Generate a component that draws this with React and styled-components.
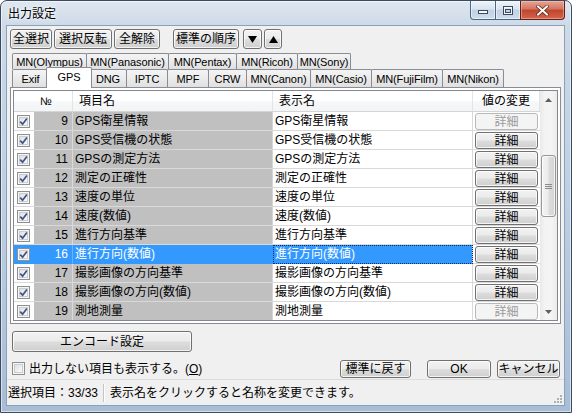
import React from 'react';
import styled, { createGlobalStyle, css } from 'styled-components';

const FONT = `"Liberation Sans", "Noto Sans CJK JP", sans-serif`;

const GlobalStyle = createGlobalStyle`
  html, body { margin: 0; padding: 0; background: #ffffff; overflow: hidden; }
  body { font-family: ${FONT}; font-size: 12px; }
  * { box-sizing: border-box; }
`;

const Window = styled.div`
  width: 572px;
  height: 413px;
  display: flex;
  flex-direction: column;
  border: 1px solid #3b4a5e;
  border-radius: 7px 7px 0 0;
  padding: 0 7px 7px 6px;
  background: linear-gradient(180deg, #dfe7f0 0px, #ccd9e7 26px, #bccfe3 200px, #a7bdd6 413px);
  box-shadow: inset 0 0 0 1px rgba(255, 255, 255, 0.55);
  font-family: ${FONT};
  font-size: 12px;
  color: #000;
`;

const TitleBar = styled.div`
  height: 25px;
  flex: none;
  display: flex;
  align-items: flex-start;
  justify-content: space-between;
`;

const Title = styled.div`
  padding: 6px 0 0 1px;
  font-size: 12px;
  line-height: 14px;
  color: #000;
  text-shadow: 0 0 6px #fff, 0 0 3px #fff;
`;

const Controls = styled.div`
  display: flex;
  margin-right: -1px;
`;

const CtrlBtn = styled.div`
  width: ${(p) => p.$w}px;
  height: 19px;
  margin-left: -1px;
  display: flex;
  align-items: center;
  justify-content: center;
  border: 1px solid #4e6580;
  border-top: none;
  background: linear-gradient(180deg, #eef3f9 0%, #d9e4f0 45%, #c2d2e3 50%, #cfdcea 100%);
  box-shadow: inset 0 0 0 1px rgba(255, 255, 255, 0.5);
  ${(p) => p.$first && css`border-radius: 0 0 0 4px;`}
  ${(p) =>
    p.$close &&
    css`
      border-color: #5b2218;
      border-radius: 0 0 4px 0;
      background: linear-gradient(180deg, #e8a493 0%, #d27460 45%, #c0452d 50%, #d4644a 100%);
      box-shadow: inset 0 0 0 1px rgba(255, 210, 200, 0.45);
    `}
`;

const Client = styled.div`
  flex: 1;
  min-height: 0;
  display: flex;
  flex-direction: column;
  background: #f0f0f0;
  box-shadow: 0 0 0 1px #8da0b9;
`;

const Toolbar = styled.div`
  display: flex;
  height: 23px;
  padding: 3px 0 0 3px;
  flex: none;
`;

const Button = styled.button`
  font-family: ${FONT};
  font-size: 12px;
  line-height: 14px;
  color: #000;
  padding: 0;
  flex: none;
  border: 1px solid #707070;
  border-radius: 3px;
  background: linear-gradient(180deg, #f2f2f2 0%, #ebebeb 48%, #dddddd 52%, #cfcfcf 100%);
  box-shadow: inset 0 0 0 1px rgba(255, 255, 255, 0.75);
  display: inline-flex;
  align-items: center;
  justify-content: center;
  white-space: nowrap;
  ${(p) =>
    p.disabled &&
    css`
      border-color: #b5b9bc;
      background: #f4f4f4;
      color: #9a9a9a;
      box-shadow: none;
    `}
`;

const ToolButton = styled(Button)`
  width: ${(p) => p.$w}px;
  height: 20px;
  margin-left: ${(p) => p.$ml || 0}px;
`;

const Tabs = styled.div`
  display: flex;
  flex-direction: column;
  margin: 4px 0 0 5px;
  flex: none;
`;

const TabRow = styled.div`
  display: flex;
  align-items: flex-end;
  height: ${(p) => p.$h}px;
`;

const Tab = styled.div`
  width: ${(p) => p.$w}px;
  height: ${(p) => p.$h}px;
  margin-left: -1px;
  &:first-child {
    margin-left: 0;
  }
  border: 1px solid #898c95;
  border-bottom: none;
  border-radius: 2px 2px 0 0;
  background: linear-gradient(180deg, #f4f4f4 0%, #ebebeb 50%, #e0e0e0 100%);
  display: flex;
  align-items: center;
  justify-content: center;
  white-space: nowrap;
  line-height: 14px;
  font-size: 11px;
  letter-spacing: -0.1px;
  ${(p) =>
    p.$active &&
    css`
      position: relative;
      z-index: 2;
      width: ${p.$w + 4}px;
      height: 21px;
      margin: 0 -2px -1px -3px;
      background: #ffffff;
      padding-bottom: 3px;
    `}
`;

const Panel = styled.div`
  margin: 0 3px;
  height: 237px;
  flex: none;
  border: 1px solid #898c95;
  background: #ffffff;
  padding: 2px;
`;

const ListView = styled.div`
  display: flex;
  height: 231px;
  border: 1px solid #828790;
  background: #ffffff;
  overflow: hidden;
`;

const ListBody = styled.div`
  flex: 1;
  display: flex;
  flex-direction: column;
  overflow: hidden;
`;

const COLS = '20px 39px 200px 200px 67px';

const HeaderRow = styled.div`
  display: grid;
  grid-template-columns: ${COLS};
  height: 21px;
  flex: none;
  background: linear-gradient(180deg, #ffffff 0%, #ffffff 50%, #f7f8fa 51%, #f3f4f6 100%);
  border-bottom: 1px solid #d5d5d5;
`;

const HeaderCell = styled.div`
  display: flex;
  align-items: center;
  justify-content: ${(p) => (p.$center ? 'center' : 'flex-start')};
  padding-left: ${(p) => (p.$center ? 0 : p.$pl ?? 6)}px;
  border-right: 1px solid ${(p) => (p.$noline ? 'transparent' : '#e5e5e5')};
  line-height: 14px;
  font-size: ${(p) => (p.$small ? 11 : 12)}px;
`;

const Row = styled.div`
  display: grid;
  grid-template-columns: ${COLS};
  height: 19px;
  flex: none;
`;

const Cell = styled.div`
  display: flex;
  align-items: center;
  border-bottom: 1px solid ${(p) => (p.$sel ? '#3399ff' : '#d9d9d9')};
  line-height: 14px;
  white-space: nowrap;
  overflow: hidden;
  background: ${(p) => (p.$sel ? '#3399ff' : p.$gray ? '#c0c0c0' : '#ffffff')};
  color: ${(p) => (p.$sel ? '#ffffff' : '#000000')};
`;

const CheckCell = styled(Cell)`
  padding-left: 3px;
`;

const NumCell = styled(Cell)`
  justify-content: flex-end;
  padding-right: 4px;
  border-right: 1px solid ${(p) => (p.$sel ? '#6fb3ff' : '#dadada')};
`;

const NameCell = styled(Cell)`
  padding-left: 2px;
  border-right: 1px solid ${(p) => (p.$sel ? '#3399ff' : '#d4d4d4')};
`;

const DispCell = styled(Cell)`
  padding-left: 2px;
  border-right: 1px solid #d9d9d9;
  ${(p) =>
    p.$sel &&
    css`
      outline: 1px dotted #0b2a66;
      outline-offset: -1px;
    `}
`;

const BtnCell = styled(Cell)`
  padding: 0 2px;
  background: #ffffff;
  border-bottom-color: #d9d9d9;
`;

const DetailButton = styled(Button)`
  width: 63px;
  height: 17px;
  margin-top: 1px;
`;

const CheckBoxBox = styled.span`
  width: 13px;
  height: 13px;
  flex: none;
  border: 1px solid #8e8f8f;
  background: linear-gradient(135deg, #dadada 0%, #efefef 55%, #ffffff 100%);
  box-shadow: inset 0 0 0 1px #f6f6f6, inset 0 0 0 2px #c9ccd1;
  display: flex;
  align-items: center;
  justify-content: center;
`;

const CheckBox = ({ checked }) => (
  <CheckBoxBox>
    {checked && (
      <svg width="9" height="9" viewBox="0 0 9 9">
        <path d="M1.2 4.6 L3.6 7.2 L7.9 1.4" stroke="#3f5486" strokeWidth="1.7" fill="none" />
      </svg>
    )}
  </CheckBoxBox>
);

const ScrollBar = styled.div`
  width: 17px;
  flex: none;
  display: flex;
  flex-direction: column;
  background: linear-gradient(90deg, #e9e9e9 0%, #f4f4f4 30%, #f4f4f4 70%, #ebebeb 100%);
`;

const ScrollArrow = styled.div`
  height: 17px;
  flex: none;
  display: flex;
  align-items: center;
  justify-content: center;
  ${(p) => p.$down && css`margin-top: auto;`}
`;

const Thumb = styled.div`
  margin: 47px 1px 0 1px;
  height: 62px;
  flex: none;
  border: 1px solid #979797;
  border-radius: 3px;
  background: linear-gradient(90deg, #f3f3f3 0%, #ececec 45%, #dcdcdc 55%, #d4d4d4 100%);
  box-shadow: inset 0 0 0 1px rgba(255, 255, 255, 0.7);
  display: flex;
  align-items: center;
  justify-content: center;
`;

const EncodeRow = styled.div`
  display: flex;
  padding: 7px 0 0 5px;
  flex: none;
`;

const EncodeButton = styled(Button)`
  width: 180px;
  height: 21px;
`;

const ActionRow = styled.div`
  display: flex;
  align-items: center;
  height: 19px;
  margin-top: 7px;
  padding: 0 4px 0 5px;
  flex: none;
`;

const CheckLabel = styled.span`
  margin-left: 4px;
  line-height: 14px;
  color: #000;
`;

const Underline = styled.span`
  text-decoration: underline;
`;

const DialogButton = styled(Button)`
  width: ${(p) => p.$w}px;
  height: 18px;
  margin-left: ${(p) => (p.$auto ? 'auto' : `${p.$ml}px`)};
`;

const StatusBar = styled.div`
  margin-top: auto;
  height: 26px;
  flex: none;
  display: flex;
  align-items: center;
  border-top: 1px solid #dcdcdc;
  position: relative;
`;

const StatusPane = styled.div`
  width: ${(p) => (p.$w ? `${p.$w}px` : 'auto')};
  flex: ${(p) => (p.$w ? 'none' : 1)};
  padding-left: ${(p) => p.$pl}px;
  line-height: 14px;
  white-space: nowrap;
`;

const StatusSep = styled.div`
  width: 2px;
  height: 18px;
  border-left: 1px solid #c5c5c5;
  border-right: 1px solid #ffffff;
  flex: none;
`;

const Grip = styled.svg`
  position: absolute;
  right: 2px;
  bottom: 2px;
`;

const rows = [
  { n: 9, name: 'GPS衛星情報', disabled: true },
  { n: 10, name: 'GPS受信機の状態' },
  { n: 11, name: 'GPSの測定方法' },
  { n: 12, name: '測定の正確性' },
  { n: 13, name: '速度の単位' },
  { n: 14, name: '速度(数値)' },
  { n: 15, name: '進行方向基準' },
  { n: 16, name: '進行方向(数値)', sel: true },
  { n: 17, name: '撮影画像の方向基準' },
  { n: 18, name: '撮影画像の方向(数値)' },
  { n: 19, name: '測地測量', disabled: true },
];

const tabsRow1 = [
  ['MN(Olympus)', 75],
  ['MN(Panasonic)', 83],
  ['MN(Pentax)', 69],
  ['MN(Ricoh)', 62],
  ['MN(Sony)', 54],
];

const tabsRow2 = [
  ['Exif', 37],
  ['GPS', 42, true],
  ['DNG', 38],
  ['IPTC', 42],
  ['MPF', 42],
  ['CRW', 39],
  ['MN(Canon)', 65],
  ['MN(Casio)', 62],
  ['MN(FujiFilm)', 72],
  ['MN(Nikon)', 62],
];

export default function App() {
  return (
    <>
      <GlobalStyle />
      <Window>
        <TitleBar>
          <Title>出力設定</Title>
          <Controls>
            <CtrlBtn $w={26} $first>
              <svg width="10" height="8" viewBox="0 0 10 8">
                <rect x="0.5" y="4.5" width="9" height="3" fill="#f4f7fb" stroke="#3a4a5e" />
              </svg>
            </CtrlBtn>
            <CtrlBtn $w={26}>
              <svg width="10" height="9" viewBox="0 0 10 9">
                <rect x="0.5" y="0.5" width="9" height="8" fill="none" stroke="#3a4a5e" />
                <rect x="1.5" y="1.5" width="7" height="6" fill="none" stroke="#f4f7fb" />
                <rect x="2.5" y="3.5" width="5" height="3" fill="none" stroke="#3a4a5e" />
              </svg>
            </CtrlBtn>
            <CtrlBtn $w={45} $close>
              <svg width="13" height="11" viewBox="0 0 13 11">
                <path d="M2 1.5 L11 9.5 M11 1.5 L2 9.5" stroke="#5a1c12" strokeWidth="3.4" strokeLinecap="square" />
                <path d="M2 1.5 L11 9.5 M11 1.5 L2 9.5" stroke="#ffffff" strokeWidth="2" strokeLinecap="square" />
              </svg>
            </CtrlBtn>
          </Controls>
        </TitleBar>
        <Client>
          <Toolbar>
            <ToolButton $w={42}>全選択</ToolButton>
            <ToolButton $w={58} $ml={2}>選択反転</ToolButton>
            <ToolButton $w={46} $ml={2}>全解除</ToolButton>
            <ToolButton $w={66} $ml={13}>標準の順序</ToolButton>
            <ToolButton $w={19} $ml={4}>
              <svg width="9" height="7" viewBox="0 0 9 7">
                <path d="M0 0 H9 L4.5 7 Z" fill="#000" />
              </svg>
            </ToolButton>
            <ToolButton $w={18} $ml={2}>
              <svg width="9" height="7" viewBox="0 0 9 7">
                <path d="M0 7 H9 L4.5 0 Z" fill="#000" />
              </svg>
            </ToolButton>
          </Toolbar>
          <Tabs>
            <TabRow $h={16}>
              {tabsRow1.map(([t, w]) => (
                <Tab key={t} $w={w} $h={16}>
                  {t}
                </Tab>
              ))}
            </TabRow>
            <TabRow $h={18}>
              {tabsRow2.map(([t, w, a]) => (
                <Tab key={t} $w={w} $h={18} $active={a}>
                  {t}
                </Tab>
              ))}
            </TabRow>
          </Tabs>
          <Panel>
            <ListView>
              <ListBody>
                <HeaderRow>
                  <HeaderCell $noline />
                  <HeaderCell $pl={6} $small>№</HeaderCell>
                  <HeaderCell $pl={6}>項目名</HeaderCell>
                  <HeaderCell $pl={6}>表示名</HeaderCell>
                  <HeaderCell $center>値の変更</HeaderCell>
                </HeaderRow>
                {rows.map((r) => (
                  <Row key={r.n}>
                    <CheckCell $sel={r.sel}>
                      <CheckBox checked />
                    </CheckCell>
                    <NumCell $gray $sel={r.sel}>{r.n}</NumCell>
                    <NameCell $gray $sel={r.sel}>{r.name}</NameCell>
                    <DispCell $sel={r.sel}>{r.name}</DispCell>
                    <BtnCell>
                      <DetailButton disabled={r.disabled}>詳細</DetailButton>
                    </BtnCell>
                  </Row>
                ))}
              </ListBody>
              <ScrollBar>
                <ScrollArrow>
                  <svg width="7" height="4" viewBox="0 0 7 4">
                    <path d="M0 4 H7 L3.5 0 Z" fill="#606060" />
                  </svg>
                </ScrollArrow>
                <Thumb>
                  <svg width="7" height="7" viewBox="0 0 7 7">
                    <path d="M0 1.5 H7 M0 3.5 H7 M0 5.5 H7" stroke="#8a8a8a" strokeWidth="1" />
                  </svg>
                </Thumb>
                <ScrollArrow $down>
                  <svg width="7" height="4" viewBox="0 0 7 4">
                    <path d="M0 0 H7 L3.5 4 Z" fill="#606060" />
                  </svg>
                </ScrollArrow>
              </ScrollBar>
            </ListView>
          </Panel>
          <EncodeRow>
            <EncodeButton>エンコード設定</EncodeButton>
          </EncodeRow>
          <ActionRow>
            <CheckBox />
            <CheckLabel>
              出力しない項目も表示する。(<Underline>O</Underline>)
            </CheckLabel>
            <DialogButton $w={71} $auto>標準に戻す</DialogButton>
            <DialogButton $w={64} $ml={16}>OK</DialogButton>
            <DialogButton $w={63} $ml={6}>キャンセル</DialogButton>
          </ActionRow>
          <StatusBar>
            <StatusPane $w={96} $pl={1}>選択項目：33/33</StatusPane>
            <StatusSep />
            <StatusPane $pl={5}>表示名をクリックすると名称を変更できます。</StatusPane>
            <Grip width="10" height="10" viewBox="0 0 10 10">
              {[
                [8, 2],
                [5, 5],
                [8, 5],
                [2, 8],
                [5, 8],
                [8, 8],
              ].map(([x, y]) => (
                <rect key={`${x}-${y}`} x={x} y={y} width="2" height="2" fill="#b0b0b0" />
              ))}
            </Grip>
          </StatusBar>
        </Client>
      </Window>
    </>
  );
}
